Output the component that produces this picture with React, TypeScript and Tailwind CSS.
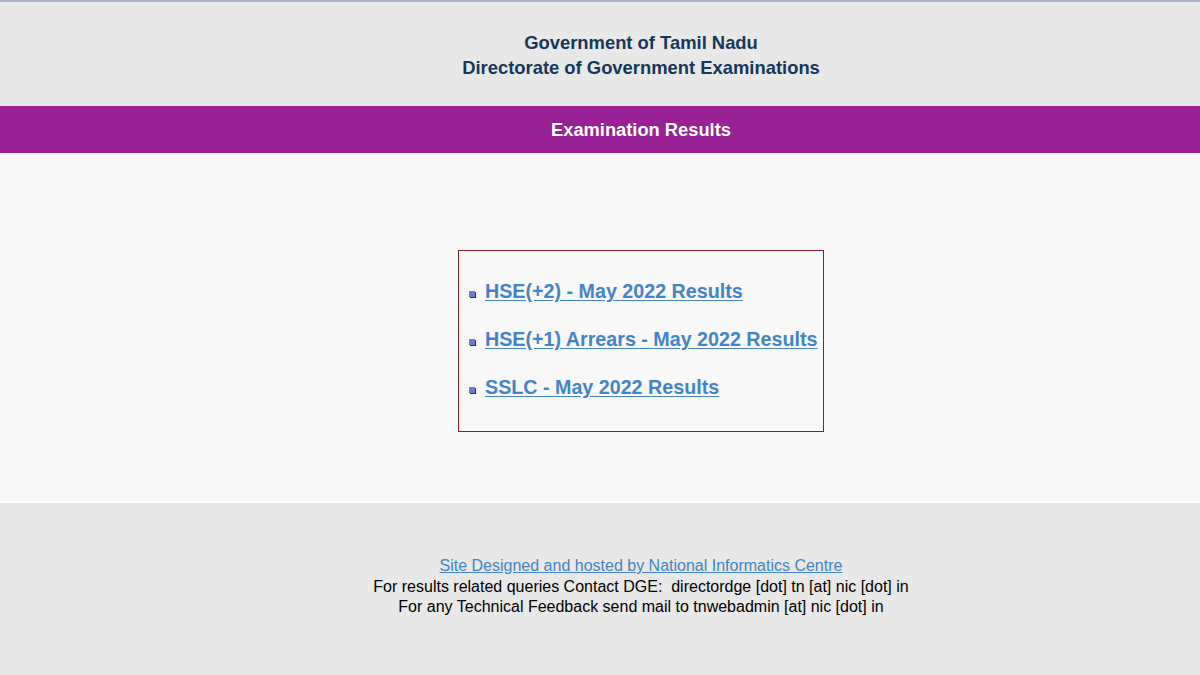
export default function App() {
  const links = [
    "HSE(+2) - May 2022 Results",
    "HSE(+1) Arrears - May 2022 Results",
    "SSLC - May 2022 Results",
  ];

  return (
    <div className="flex h-[675px] w-[1200px] flex-col font-['Liberation_Sans',Arial,sans-serif]">
      {/* header */}
      <div className="h-[106px] border-t-2 border-[#a9b3c9] bg-[#e8e8e8] pl-[82px] pt-[28px] text-center text-[18.4px] font-bold leading-[25px] text-[#15375c]">
        <div>Government of Tamil Nadu</div>
        <div>Directorate of Government Examinations</div>
      </div>

      {/* title band */}
      <div className="flex h-[47px] items-center justify-center bg-[#992196] pl-[82px] text-[18.3px] font-bold text-white">
        Examination Results
      </div>

      {/* content */}
      <div className="flex h-[348px] justify-center bg-[#f8f8f8] pl-[82px] pt-[97px]">
        <div className="h-[182px] w-[366px] border border-[#8a1c24] pl-[10px] pt-[17px]">
          {links.map((l) => (
            <div key={l} className="flex h-[48px] items-center gap-[10px]">
              <span className="mt-[4px] inline-block h-[6px] w-[6px] bg-[#6a7fd0] shadow-[1px_1px_0_#333]" />
              <a
                href="#"
                className="text-[19.7px] font-bold text-[#4384c4] underline underline-offset-[2px]"
              >
                {l}
              </a>
            </div>
          ))}
        </div>
      </div>

      {/* footer */}
      <div className="flex flex-1 flex-col items-center border-t-2 border-[#fdfdfd] bg-[#e8e8e8] pl-[82px] pt-[53px] text-[16px] leading-[20.5px] text-black">
        <a href="#" className="text-[#4384c4] underline">
          Site Designed and hosted by National Informatics Centre
        </a>
        <div>For results related queries Contact DGE:&nbsp; directordge [dot] tn [at] nic [dot] in</div>
        <div>For any Technical Feedback send mail to tnwebadmin [at] nic [dot] in</div>
      </div>
    </div>
  );
}
